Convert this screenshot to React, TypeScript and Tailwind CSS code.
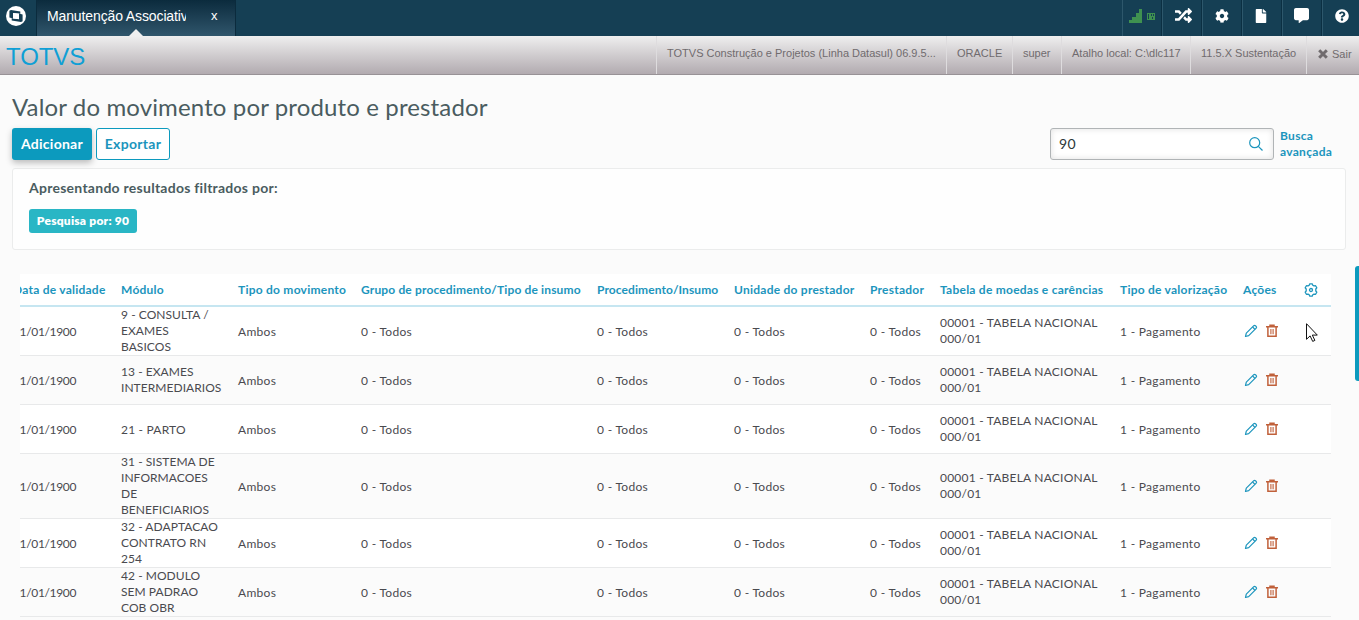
import { FaRandom, FaCog, FaFile, FaCommentAlt, FaQuestionCircle } from 'react-icons/fa'

interface Row {
  modulo: string[]
  striped: boolean
}

const rows: Row[] = [
  { modulo: ['9 - CONSULTA /', 'EXAMES', 'BASICOS'], striped: false },
  { modulo: ['13 - EXAMES', 'INTERMEDIARIOS'], striped: true },
  { modulo: ['21 - PARTO'], striped: false },
  { modulo: ['31 - SISTEMA DE', 'INFORMACOES', 'DE', 'BENEFICIARIOS'], striped: true },
  { modulo: ['32 - ADAPTACAO', 'CONTRATO RN', '254'], striped: false },
  { modulo: ['42 - MODULO', 'SEM PADRAO', 'COB OBR'], striped: true },
]

const columns = [
  { label: 'Data de validade', width: 'w-[108px]' },
  { label: 'Módulo', width: 'w-[117px]' },
  { label: 'Tipo do movimento', width: 'w-[123px]' },
  { label: 'Grupo de procedimento/Tipo de insumo', width: 'w-[236px] tracking-[0.15px]' },
  { label: 'Procedimento/Insumo', width: 'w-[137px] tracking-[0.08px]' },
  { label: 'Unidade do prestador', width: 'w-[136px]' },
  { label: 'Prestador', width: 'w-[70px]' },
  { label: 'Tabela de moedas e carências', width: 'w-[180px]' },
  { label: 'Tipo de valorização', width: 'w-[123px]' },
  { label: 'Ações', width: 'w-[61px]' },
]

const session = [
  { text: 'TOTVS Construção e Projetos (Linha Datasul) 06.9.5...', width: 'w-[290px]' },
  { text: 'ORACLE', width: 'w-[66px]' },
  { text: 'super', width: 'w-[49px]' },
  { text: 'Atalho local: C:\\dlc117', width: 'w-[129px]' },
  { text: '11.5.X Sustentação', width: 'w-[116px]' },
]

function Logo() {
  return (
    <svg className="h-[20px] w-[20px]" viewBox="0 0 20 20" fill="none">
      <circle cx="10" cy="10" r="10" fill="#fff" />
      <path d="M3.4 7.2V4.8L5 3.9l9.3 1.7v2.2L7 7v5.4l-3.6-1z" fill="#153f54" />
      <path d="M16.6 12.8v2.4l-1.6.9-9.3-1.7v-2.2l7.3.8V7.6l3.6 1z" fill="#153f54" />
      <path d="M7 7l6 .8v5.4l-6-.8z" fill="#fff" />
    </svg>
  )
}

function SignalIcon() {
  return (
    <svg className="mb-[5px] h-[14px] w-[27px]" viewBox="0 0 27 14" fill="#3f9150" shapeRendering="crispEdges">
      <rect x="0" y="11" width="4" height="3" />
      <rect x="3" y="8" width="4" height="6" />
      <rect x="7" y="4" width="3" height="10" />
      <rect x="10" y="0" width="3" height="14" />
      <path d="M18 4h8v7h-8zM19 5v5h1V5zM22 5v2h1V5zM23 8v2h1V8zM24 5v2h1V5z" fillRule="evenodd" />
    </svg>
  )
}

function CloseIcon() {
  return (
    <svg className="mr-[4px] h-[10px] w-[10px]" viewBox="0 0 10 10" fill="none" stroke="#706b6e" strokeWidth="3">
      <path d="m1.2 1.2 7.6 7.6M8.8 1.2 1.2 8.8" />
    </svg>
  )
}

function PencilIcon() {
  return (
    <svg className="h-[14px] w-[14px]" viewBox="0 0 14 14" fill="none" stroke="#1c95bd" strokeWidth="1.2" strokeLinejoin="round">
      <path d="M1.5 12.5 2.3 9.2 9.8 1.7Q10.6 1 11.4 1.7L12.2 2.5Q13 3.4 12.2 4.2L4.7 11.7Z" />
      <path d="M8.6 3 11 5.4" />
    </svg>
  )
}

function TrashIcon() {
  return (
    <svg className="h-[14px] w-[12px]" viewBox="0 0 12 14" fill="none" stroke="#c0603a" strokeWidth="1.5">
      <path d="M0 2.7h12M4 2.5V1.2h4v1.3M1.9 3v9.2h8.2V3" />
      <path d="M4.9 5v5.2M7.1 5v5.2" strokeWidth="1.1" />
    </svg>
  )
}

function GearIcon() {
  return (
    <svg className="h-[14px] w-[14px]" viewBox="0 0 14 14" fill="none" stroke="#1c95bd" strokeWidth="1.3" strokeLinejoin="round">
      <path d="M5.2 2.2 5.8.8h2.4l.6 1.4 1.2.7 1.6-.2 1.2 2.1-1 1.2v2l1 1.2-1.2 2.1-1.6-.2-1.2.7-.6 1.4H5.8l-.6-1.4-1.2-.7-1.6.2-1.2-2.1 1-1.2V6l-1-1.2 1.2-2.1 1.6.2z" />
      <circle cx="7" cy="7" r="1.5" />
    </svg>
  )
}

function TopBar() {
  const button = 'flex h-9 w-10 items-center justify-center border-l border-[#2d576b] shadow-[inset_-1px_0_0_#0b2f42]'
  return (
    <header className="flex h-9 bg-[#153f54] text-white">
      <div className="flex w-[36px] items-center pl-[6px] pb-[4px]">
        <Logo />
      </div>
      <div className="relative flex w-[200px] items-center border-l border-r border-[#0b2b3d] bg-linear-to-b from-[#0b2b3d] to-[#30566c] pl-[10px] pb-[4px] font-['Liberation_Sans'] text-[14px]">
        <span className="w-[139px] overflow-hidden whitespace-nowrap tracking-[-0.12px]">Manutenção Associativa</span>
        <span className="ml-[25px] text-[13px]">x</span>
        <svg className="absolute bottom-0 left-[92px] h-[7px] w-[14px]" viewBox="0 0 14 7">
          <path d="M0 7 7 0l7 7z" fill="#efefef" />
        </svg>
      </div>
      <div className="ml-auto flex">
        <div className={button}><SignalIcon /></div>
        <div className={button}><FaRandom className="mb-[5px] ml-[1px] size-[17px]" /></div>
        <div className={button}><FaCog className="mb-[5px] mr-[2px] size-[14px]" /></div>
        <div className={button}><FaFile className="mb-[5px] mr-[3px] size-[14px]" /></div>
        <div className={button}><FaCommentAlt className="mb-[5px] mr-[2px] size-[15px]" /></div>
        <div className="flex h-9 w-[37px] items-center justify-center border-l border-[#2d576b]">
          <FaQuestionCircle className="mb-[5px] ml-[2px] size-[14px]" />
        </div>
      </div>
    </header>
  )
}

function SessionBar() {
  return (
    <div className="flex h-[39px] border-b border-[#989296] bg-linear-to-b from-[#efefef] to-[#b2abb0] font-['Liberation_Sans'] text-[11px] text-[#706b6e]">
      <div className="pl-[6px] pt-[5px] text-[24px] leading-[31px] tracking-[-0.1px] text-[#0f9fd5]">TOTVS</div>
      <div className="ml-auto flex">
        {session.map((item) => (
          <div key={item.text} className={`${item.width} border-l border-[#dedcde] pl-[10px] pt-[9px] leading-[16px] whitespace-nowrap`}>
            {item.text}
          </div>
        ))}
        <div className="flex w-[53px] items-center border-l border-[#dedcde] pl-[11px] pb-[2px]">
          <CloseIcon />
          Sair
        </div>
      </div>
    </div>
  )
}

function Toolbar() {
  return (
    <div className="flex h-8 items-center font-bold">
      <button className="h-8 w-20 rounded-[3px] bg-[#0c9abe] pb-[2px] text-[14px] tracking-[0.25px] text-white shadow-[0_3px_6px_rgba(0,0,0,0.25)]">
        Adicionar
      </button>
      <button className="ml-1 h-8 w-[74px] rounded-[3px] border border-[#0c9abe] bg-white pb-[2px] text-[14px] tracking-[0.3px] text-[#1c95bd]">
        Exportar
      </button>
      <div className="ml-auto flex h-8 w-[224px] items-center justify-between rounded-[3px] border border-[#b0b4b6] bg-white px-2 shadow-[inset_0_0_6px_rgba(0,0,0,0.12)]">
        <span className="pb-[1px] text-[14px] font-normal tracking-[0.4px] text-[#2c3739]">90</span>
        <svg className="mr-[2px] h-[14px] w-[14px]" viewBox="0 0 14 14" fill="none" stroke="#1c95bd" strokeWidth="1.2">
          <circle cx="5.7" cy="5.7" r="5" />
          <path d="m9.3 9.3 4.2 4.2" />
        </svg>
      </div>
      <div className="ml-[6px] w-[66px] text-[12px] leading-[16px] tracking-[0.3px] text-[#1c95bd]">
        Busca<br />avançada
      </div>
    </div>
  )
}

function ResultsTable() {
  return (
    <div className="ml-[8px] mt-6 w-[1311px] overflow-hidden">
      <table className="-ml-[15px] w-[1326px] table-fixed border-collapse text-[12px] leading-[16px] text-[#4a4a4f]">
        <thead>
          <tr className="h-[32px] border-b-2 border-[#c6e6f1] bg-white text-left tracking-[0.24px] text-[#1c95bd]">
            {columns.map((col) => (
              <th key={col.label} className={`${col.width} whitespace-nowrap px-2 pt-[1px] font-bold`}>{col.label}</th>
            ))}
            <th className="w-[35px] px-2 pt-[1px]"><GearIcon /></th>
          </tr>
        </thead>
        <tbody className="tracking-[0.3px]">
          {rows.map((row) => (
            <tr
              key={row.modulo[0]}
              className={`${row.modulo.length === 4 ? 'h-[65px]' : 'h-[49px]'} ${row.striped ? 'bg-[#fbfbfb]' : 'bg-white'} border-b border-[#e8e9ea]`}
            >
              <td className="px-2 pt-[2px] tracking-[-0.35px]">01/01/1900</td>
              <td className={`${row.modulo.length === 1 ? 'pt-[2px] tracking-[0.2px]' : 'tracking-[0.05px]'} whitespace-nowrap px-2`}>
                {row.modulo.map((line) => (
                  <div key={line}>{line}</div>
                ))}
              </td>
              <td className="px-2 pt-[2px]">Ambos</td>
              <td className="px-2 pt-[2px]">0 - Todos</td>
              <td className="px-2 pt-[2px]">0 - Todos</td>
              <td className="px-2 pt-[2px]">0 - Todos</td>
              <td className="px-2 pt-[2px]">0 - Todos</td>
              <td className="whitespace-nowrap px-2 tracking-[0.22px]">00001 - TABELA NACIONAL<br />000/01</td>
              <td className="px-2 pt-[2px]">1 - Pagamento</td>
              <td className="pl-[9px]">
                <div className="flex items-center gap-[8px] pb-[1px]">
                  <PencilIcon />
                  <TrashIcon />
                </div>
              </td>
              <td />
            </tr>
          ))}
        </tbody>
      </table>
    </div>
  )
}

export default function App() {
  return (
    <div className="relative h-[620px] w-[1359px] overflow-hidden bg-[#fbfbfb] font-[Lato,sans-serif]">
      <TopBar />
      <SessionBar />
      <main className="pl-3 pr-[13px] pt-[16px]">
        <h1 className="mb-[5px] text-[24px] leading-[32px] tracking-[0.13px] text-[#4a5c60]">Valor do movimento por produto e prestador</h1>
        <Toolbar />
        <section className="mt-2 h-[82px] rounded-[3px] border border-[#ebecec] bg-[#fefefe] px-4 pt-[10px]">
          <p className="text-[14px] font-bold leading-[18px] tracking-[0.26px] text-[#4a5c60]">Apresentando resultados filtrados por:</p>
          <span className="mt-[12px] flex h-6 w-[108px] items-center justify-center rounded-[3px] bg-[#29b6c5] text-[12px] font-extrabold tracking-[0.22px] text-white">
            Pesquisa por: 90
          </span>
        </section>
        <ResultsTable />
      </main>

      {/* side drawer handle */}
      <div className="absolute right-0 top-[266px] h-[115px] w-[4px] rounded-l-[3px] bg-[#0c9abe]" />

      {/* mouse pointer */}
      <svg className="absolute left-[1306px] top-[323px] h-[19px] w-[12px]" viewBox="0 0 12 19">
        <path d="M.5.7v15.6l3.6-3.4 2.6 5.5 2.2-1-2.6-5.3h5z" fill="#fff" stroke="#111" strokeWidth="1" />
      </svg>
    </div>
  )
}
